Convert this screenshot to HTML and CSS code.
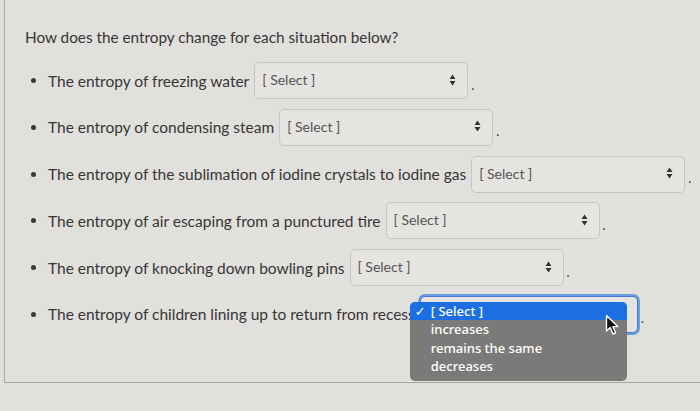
FILE: index.html
```html
<!DOCTYPE html>
<html lang="en">
<head>
  <meta charset="UTF-8">
  <meta name="viewport" content="width=device-width, initial-scale=1.0">
  <title>Entropy Question</title>
  <link rel="stylesheet" href="styles.css">
</head>
<body>

  <div class="question">
    <p class="prompt">How does the entropy change for each situation below?</p>

    <ul class="answers">
      <li>
        <span>The entropy of freezing water</span>
        <div class="dropdown">
          <span class="dropdown-label">[ Select ]</span>
          <svg class="arrows" width="7" height="12" viewBox="0 0 7 12"><path d="M3.5 0.5 L6.5 5 L0.5 5 Z M0.5 7 L6.5 7 L3.5 11.5 Z"/></svg>
        </div>
        <span class="dot">.</span>
      </li>
      <li>
        <span>The entropy of condensing steam</span>
        <div class="dropdown">
          <span class="dropdown-label">[ Select ]</span>
          <svg class="arrows" width="7" height="12" viewBox="0 0 7 12"><path d="M3.5 0.5 L6.5 5 L0.5 5 Z M0.5 7 L6.5 7 L3.5 11.5 Z"/></svg>
        </div>
        <span class="dot">.</span>
      </li>
      <li>
        <span>The entropy of the sublimation of iodine crystals to iodine gas</span>
        <div class="dropdown">
          <span class="dropdown-label">[ Select ]</span>
          <svg class="arrows" width="7" height="12" viewBox="0 0 7 12"><path d="M3.5 0.5 L6.5 5 L0.5 5 Z M0.5 7 L6.5 7 L3.5 11.5 Z"/></svg>
        </div>
        <span class="dot">.</span>
      </li>
      <li>
        <span>The entropy of air escaping from a punctured tire</span>
        <div class="dropdown">
          <span class="dropdown-label">[ Select ]</span>
          <svg class="arrows" width="7" height="12" viewBox="0 0 7 12"><path d="M3.5 0.5 L6.5 5 L0.5 5 Z M0.5 7 L6.5 7 L3.5 11.5 Z"/></svg>
        </div>
        <span class="dot">.</span>
      </li>
      <li>
        <span>The entropy of knocking down bowling pins</span>
        <div class="dropdown">
          <span class="dropdown-label">[ Select ]</span>
          <svg class="arrows" width="7" height="12" viewBox="0 0 7 12"><path d="M3.5 0.5 L6.5 5 L0.5 5 Z M0.5 7 L6.5 7 L3.5 11.5 Z"/></svg>
        </div>
        <span class="dot">.</span>
      </li>
      <li>
        <span>The entropy of children lining up to return from recess</span>
        <div class="dropdown open">
          <span class="dropdown-label">[ Select ]</span>
          <svg class="arrows" width="7" height="12" viewBox="0 0 7 12"><path d="M3.5 0.5 L6.5 5 L0.5 5 Z M0.5 7 L6.5 7 L3.5 11.5 Z"/></svg>

          <!-- native option list, opened -->
          <div class="menu">
            <div class="menu-item active"><span class="check">&#10003;</span>[ Select ]</div>
            <div class="menu-item">increases</div>
            <div class="menu-item">remains the same</div>
            <div class="menu-item">decreases</div>
          </div>

          <svg class="pointer" width="16" height="22" viewBox="0 0 16 22">
            <path d="M1.5 1.5 L1.5 17 L5.2 13.6 L8 20 L10.6 18.9 L7.9 12.6 L12.8 12.6 Z" fill="#111" stroke="#fff" stroke-width="1.4" stroke-linejoin="round"/>
          </svg>
        </div>
        <span class="dot">.</span>
      </li>
    </ul>
  </div>

</body>
</html>
```

FILE: styles.css
```css
body {
  margin: 0;
  background: #e2e0dc;
  font-family: Lato, "Open Sans", sans-serif;
  color: #363636;
}
.question {
  margin-left: 4px;
  height: 383px;
  box-sizing: border-box;
  padding: 27px 0 0 20px;
  border-left: 1px solid #a8a7a4;
  border-bottom: 1px solid #a8a7a4;
}
.prompt {
  margin: 0;
  font-size: 15.3px;
  line-height: 20px;
}
.answers {
  list-style: none;
  margin: 15px 0 0 0;
  padding: 0;
}
.answers li {
  display: flex;
  align-items: center;
  height: 37px;
  margin-bottom: 9.8px;
  font-size: 15.5px;
  white-space: nowrap;
}
.answers li::before {
  content: "";
  width: 5px;
  height: 5px;
  border-radius: 50%;
  background: #3a3a3a;
  margin: 0 12px 0 6px;
  flex-shrink: 0;
}
.dot {
  margin-left: 3px;
  margin-top: 8px;
  font-size: 13px;
}
/* select boxes */
.dropdown {
  position: relative;
  display: flex;
  align-items: center;
  justify-content: space-between;
  box-sizing: border-box;
  width: 214px;
  height: 37px;
  margin-left: 5px;
  padding: 0 11px 2px 7px;
  border: 1px solid #c3c6c7;
  border-radius: 5px;
  background: #e5e4e1;
}
.dropdown-label {
  font-size: 14px;
  color: #555;
}
.arrows {
  fill: #333;
}
.dropdown.open {
  width: 218px;
  border: 1px solid #3f7bd4;
  box-shadow: 0 0 0 2px #6b9be0;
}
/* opened option list */
.menu {
  position: absolute;
  left: -11px;
  top: 5px;
  width: 217px;
  padding-bottom: 5px;
  background: #7b7a79;
  border-radius: 5px;
  font-family: "Noto Sans", "DejaVu Sans", sans-serif;
  font-size: 13px;
  font-weight: 500;
  color: #fff;
  overflow: hidden;
}
.menu-item {
  height: 18.5px;
  line-height: 18.5px;
  padding-left: 21px;
}
.menu-item.active {
  position: relative;
  background: #1c6fe3;
}
.check {
  position: absolute;
  left: 5px;
}
.pointer {
  position: absolute;
  left: 184px;
  top: 17px;
}
```
